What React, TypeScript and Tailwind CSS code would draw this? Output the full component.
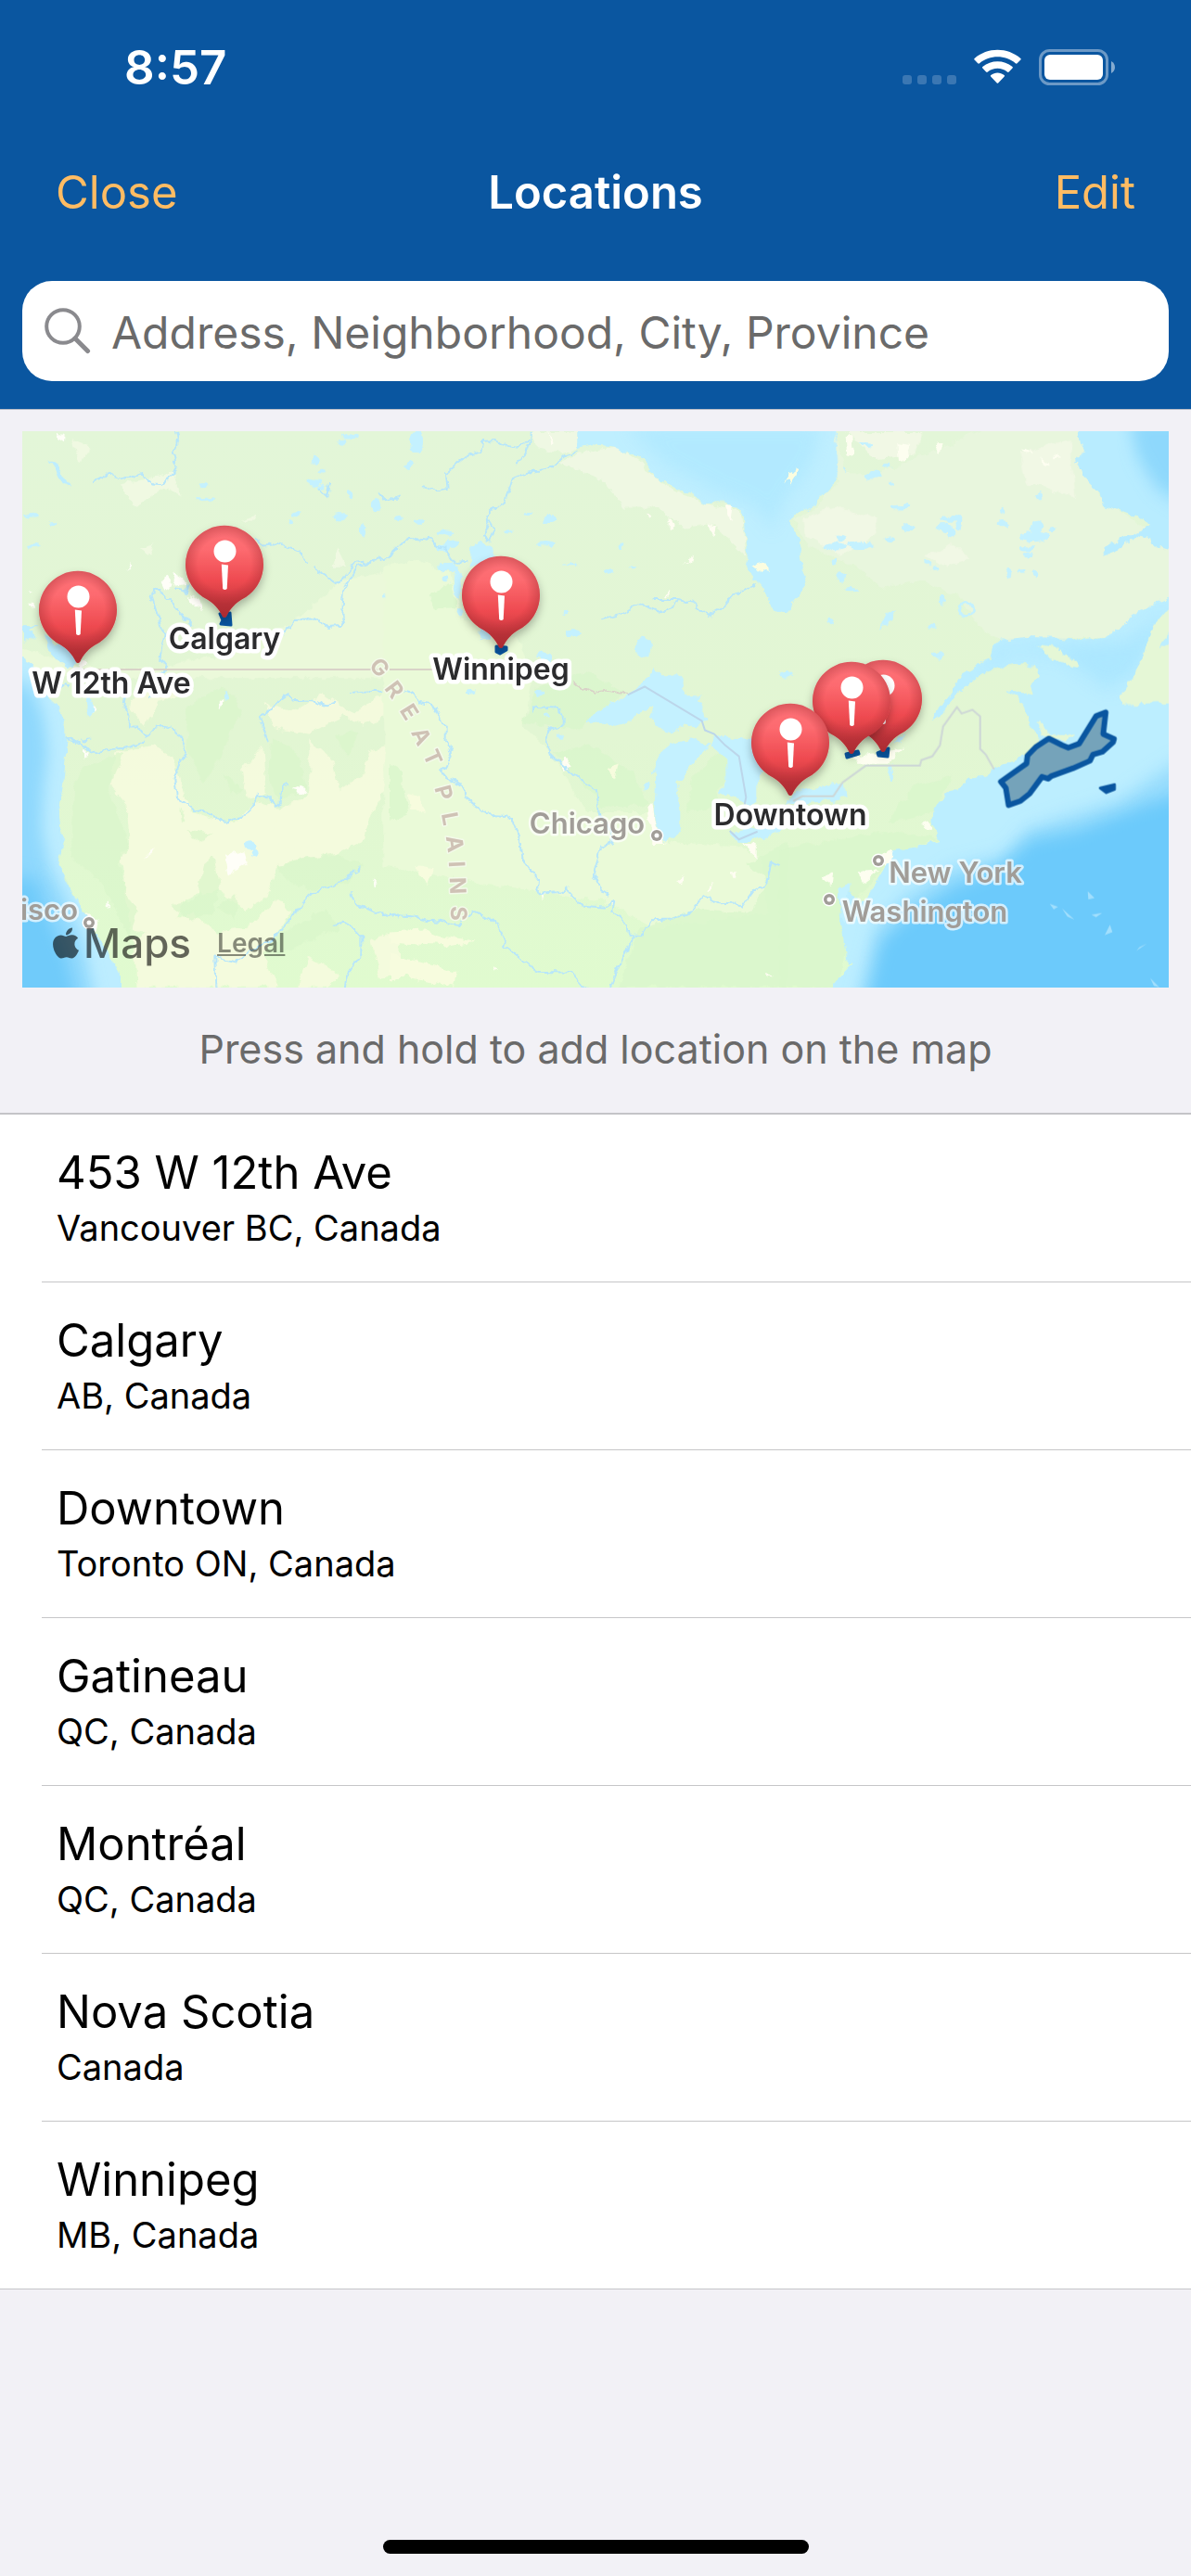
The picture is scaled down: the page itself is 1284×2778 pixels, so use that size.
import { useState } from "react";
import { FaApple } from "react-icons/fa";

type Location = { name: string; detail: string };

const locations: Location[] = [
  { name: "453 W 12th Ave", detail: "Vancouver BC, Canada" },
  { name: "Calgary", detail: "AB, Canada" },
  { name: "Downtown", detail: "Toronto ON, Canada" },
  { name: "Gatineau", detail: "QC, Canada" },
  { name: "Montréal", detail: "QC, Canada" },
  { name: "Nova Scotia", detail: "Canada" },
  { name: "Winnipeg", detail: "MB, Canada" },
];

// tip of each pin, back to front
const pins = [
  { x: 242, y: 666 },
  { x: 84, y: 715 },
  { x: 540, y: 699 },
  { x: 952, y: 811 },
  { x: 918, y: 813 },
  { x: 852, y: 858 },
];

const pinLabels = [
  { text: "Calgary", x: 242, y: 700 },
  { text: "W 12th Ave", x: 120, y: 748 },
  { text: "Winnipeg", x: 540, y: 733 },
  { text: "Downtown", x: 852, y: 890 },
];

const cities = [
  { text: "isco", x: 53, y: 992, dotX: 96, dotY: 995 },
  { text: "Chicago", x: 633, y: 899, dotX: 708, dotY: 901 },
  { text: "New York", x: 1030, y: 952, dotX: 947, dotY: 928 },
  { text: "Washington", x: 997, y: 994, dotX: 894, dotY: 970 },
];

const plains = [
  { char: "G", x: 409, y: 720, angle: 50 },
  { char: "R", x: 425, y: 744, angle: 53 },
  { char: "E", x: 441, y: 768, angle: 58 },
  { char: "A", x: 454, y: 794, angle: 63 },
  { char: "T", x: 466, y: 817, angle: 66 },
  { char: "P", x: 478, y: 855, angle: 75 },
  { char: "L", x: 485, y: 883, angle: 79 },
  { char: "A", x: 490, y: 910, angle: 82 },
  { char: "I", x: 492, y: 932, angle: 87 },
  { char: "N", x: 493, y: 955, angle: 88 },
  { char: "S", x: 494, y: 985, angle: 91 },
];

// [x, y, rx, ry] in tile units
const westLakes = [
  [1128, 52, 24, 9], [1108, 68, 12, 6], [1018, 120, 10, 14], [1045, 145, 16, 6], [1015, 172, 24, 9],
  [1040, 186, 14, 7], [1130, 208, 8, 14], [1215, 238, 16, 14], [958, 257, 16, 7], [944, 282, 9, 7],
  [1100, 268, 22, 9], [1172, 302, 8, 16], [665, 216, 32, 5], [660, 182, 16, 5], [1245, 478, 6, 8],
  [100, 262, 20, 6], [176, 284, 14, 5], [110, 346, 22, 5], [730, 748, 7, 13], [290, 775, 10, 26],
  [810, 1150, 20, 14], [824, 1172, 12, 14],
];

const centralLakes = [
  [90, 66, 24, 30], [62, 128, 14, 9], [28, 272, 10, 10], [95, 281, 11, 7], [178, 312, 26, 8],
  [200, 340, 26, 10], [172, 350, 20, 8], [190, 402, 34, 12], [221, 448, 12, 44], [180, 435, 10, 6],
  [448, 260, 14, 4], [520, 274, 24, 10], [386, 307, 16, 5], [505, 338, 28, 7], [586, 396, 22, 3],
  [750, 343, 10, 6], [708, 414, 12, 6], [784, 402, 12, 4], [570, 525, 10, 6], [595, 578, 22, 10],
  [820, 618, 26, 26], [502, 640, 24, 10], [484, 740, 18, 8], [266, 737, 14, 6], [510, 797, 12, 4],
  [552, 856, 12, 6], [827, 992, 9, 9], [228, 522, 10, 9], [1276, 690, 12, 7], [308, 580, 22, 18],
];

const eastLakes = [
  [278, 72, 20, 5], [305, 155, 24, 11], [350, 132, 14, 8], [362, 173, 10, 5], [388, 242, 34, 6],
  [418, 297, 22, 9], [180, 346, 40, 9], [264, 342, 44, 9], [358, 328, 20, 8], [196, 326, 20, 8],
  [180, 388, 10, 8], [200, 428, 16, 12], [234, 462, 20, 4], [535, 296, 26, 12], [555, 272, 32, 9],
  [560, 312, 14, 14], [582, 284, 10, 20], [725, 252, 8, 6], [724, 288, 14, 9], [838, 212, 14, 8],
  [824, 320, 50, 14], [834, 296, 22, 16], [800, 352, 26, 8], [884, 300, 12, 6], [806, 370, 18, 7],
  [742, 418, 12, 12], [785, 414, 12, 6], [825, 422, 10, 9], [484, 390, 12, 5], [504, 407, 10, 8],
  [528, 490, 10, 9], [496, 560, 16, 6], [170, 548, 10, 7], [514, 636, 20, 8], [22, 690, 22, 8],
  [362, 958, 7, 28],
];

// lake list to closed path of ellipses
const toPath = (lakes: number[][]) =>
  lakes
    .map(
      ([x, y, rx, ry]) =>
        `M${x - rx} ${y}a${rx} ${ry} 0 1 0 ${rx * 2} 0a${rx} ${ry} 0 1 0 ${-rx * 2} 0Z`
    )
    .join("");

const pacific =
  "M72 645L100 660 130 690 160 755 185 775 200 800 214 830V890L208 960 200 1010 188 1050 195 1100 207 1130 190 1200 220 1250 240 1290 290 1350 320 1400 360 1450 390 1500V1545H60V645Z";

const hudsonBay =
  "M610 20V85L650 75 720 80 800 105 860 150 870 170 960 200 1020 232 1080 228 1110 240 1145 245 1148 310 1155 360 1150 400 1185 440 1200 455 1220 480 1240 520 1260 517 1290 525 1300 500 1340 460 1350 430 1330 380 1325 330 1295 275 1320 260 1380 235 1450 165 1480 155 1465 130 1450 80 1438 20Z";

const labradorSea =
  "M965 20L975 70 990 90 960 110 975 150 1010 180 1040 205 1045 235 1100 250 1150 265 1200 285 1180 300 1150 310 1060 345 1050 372 1100 355 1160 315 1200 322 1210 355 1240 345 1280 355V20Z";

const atlantic =
  "M1280 480L1220 500 1140 530 1100 570 1060 592 980 598 900 592 800 590 720 597 690 620 680 650 630 670 590 690 560 730 530 770 490 812 530 795 570 745 620 710 700 675 780 660 830 670 838 700 815 718 825 745 790 740 730 735 780 760 800 790 815 830 845 860 830 900 740 925 690 940 670 965 610 970 590 990 540 1010 500 1050 495 1090 520 1135 460 1150 370 1160 340 1210 290 1280 255 1310 225 1265 205 1260 190 1290 200 1350 215 1450 235 1470 190 1510 150 1550H1280Z";

const river = {
  fill: "none",
  stroke: "#b7e6fb",
  strokeWidth: 2,
  vectorEffect: "non-scaling-stroke" as const,
};

const border = {
  fill: "none",
  stroke: "#d9d3c8",
  strokeWidth: 2,
  vectorEffect: "non-scaling-stroke" as const,
};

function WestTile() {
  return (
    <g transform="translate(0 450) scale(0.33333 0.40179)">
      <g filter="url(#rough)">
        <path fill="#ebf9da" d="M72 620L250 670 480 680 700 640 930 560 1100 440 1330 400V700H72Z" />
        <g fill="#f7fbde" opacity=".9">
          <path d="M450 710L560 700 600 740 520 760 470 830 420 780ZM860 770L960 790 1040 740 1130 790 1290 730 1240 800 1180 830 1110 800 1000 850 880 830ZM370 900L500 880 560 920 620 1060 760 1090 820 1030 900 1050 1010 1010 1080 1040 1040 1180 900 1200 860 1290 790 1320 700 1270 600 1290 540 1400 420 1370 390 1170 420 1150 410 1040 360 990ZM780 950L850 880 860 1010 800 1020Z" />
          <path d="M1000 860L1080 930 1100 1000 1180 960 1190 900 1270 880 1290 960 1240 1010 1190 1080 1180 1140 1060 1180 1000 1150 900 1160 890 1080 960 1060 1000 1000Z" />
          <path d="M430 1400L620 1330 700 1380 800 1370 900 1290 940 1330 850 1440 900 1530H440ZM1000 1450L1100 1500 1060 1530H960ZM1200 1400L1290 1380V1490L1230 1510Z" />
        </g>
        <path fill="#d9f5cb" opacity=".75" d="M610 1110L690 1120 640 1140ZM690 1180L710 1250 690 1330 610 1350 545 1310 640 1290 660 1200ZM720 950L790 1000 750 1010ZM900 1200L1080 1170 1180 1200 1120 1250 1000 1270 930 1240ZM1080 860L1160 840 1130 910ZM580 1050L600 1080 585 1090ZM700 1310L770 1280 760 1350ZM860 1410L1050 1320 1100 1370 900 1440ZM270 940L400 900 350 1000 420 1150 380 1200 440 1330 420 1400 330 1250 230 1180 240 1000ZM600 780L720 720 780 780 720 900 660 980 610 900ZM880 860L960 900 990 1000 900 1030 870 960Z" />
        <path fill="#f0f9e2" d="M390 180L560 150 585 210 540 190 430 240ZM780 280L830 260 820 280ZM450 350L490 370 500 340ZM230 60L290 80 260 120ZM1090 350L1120 400 1070 400Z" />
        <path fill="#fffef8" d="M180 40L212 42 210 65 190 55ZM405 410L420 390 420 402ZM515 440L540 428 560 450 530 465ZM555 412L590 430 605 450 570 455ZM600 475L650 490 660 515 630 510ZM88 500L110 500 110 520ZM90 465L105 470 95 475ZM290 760L305 790 290 800ZM255 655L285 668 260 672ZM270 890L285 905 270 910ZM945 1000L970 990 990 1010ZM280 1330L320 1350 310 1380 280 1360ZM340 1310L355 1300 350 1315ZM730 1180L790 1160 800 1200 740 1230ZM1205 1240L1220 1250 1212 1255ZM465 1185L500 1148 490 1170ZM710 770L725 760 715 785Z" />
        <path fill="#bdedff" d={pacific} />
        <path fill="#bdedff" d="M140 585L170 600 220 625 250 650 240 675 190 655 155 625ZM72 560L125 560 90 570 120 590 72 600ZM160 110L190 130 230 195 200 180Z" />
        <path fill="#c4f1ff" d={toPath(westLakes)} />
      </g>
      <clipPath id="pacificClip">
        <path d={pacific} />
      </clipPath>
      <g clipPath="url(#pacificClip)">
        <path fill="#8fd8fd" filter="url(#soft)" d="M20 700L100 720 140 800 155 900 140 1000 135 1110 160 1210 210 1290 270 1420 310 1580H20Z" />
        <path fill="#6fcbfa" filter="url(#soft)" d="M20 1230L120 1240 160 1350 210 1440 250 1580H20Z" />
      </g>
      <g filter="url(#rough)">
        <path {...river} d="M570 37L575 60 560 90 570 130 555 160 520 180 490 178 460 150 410 165 350 153 300 175" />
        <path {...river} d="M820 322L850 342 905 338 965 358 1000 390M1010 400L1085 445 1105 440 1145 390 1210 385 1260 375 1290 350M1210 385L1155 400 1110 470 1105 515 1118 535 1100 562 1060 565 1030 543 950 545 920 580" />
        <path {...river} d="M490 480L500 462 560 505 620 560M490 480L530 580 515 640 540 665 525 690M570 460L600 470 608 445" />
        <path {...river} d="M405 750L400 775 418 800 420 830 445 830 468 860 490 838 550 828 575 850 602 895 565 970 572 1015 625 1055 680 1060 700 1078 735 1083 790 1072 835 1010 860 1020 890 1045 908 1030 915 990 932 985" />
        <path {...river} d="M468 870L400 888 330 893 290 900 265 880 215 855M265 868L295 862M190 720L225 725" />
        <path {...river} d="M867 875L860 850 838 808 880 775 935 742 950 760 1000 758 1060 775 1080 768M1130 742L1210 736 1290 745M480 750L540 735" />
        <path {...river} d="M715 1545L700 1530 697 1450 765 1462 830 1420 885 1400 940 1345 1000 1280 1060 1262 1160 1220 1163 1205M1138 1275L1155 1310 1200 1322 1290 1343M1075 1357L1140 1365 1168 1390 1168 1440 1120 1500 1115 1540M1225 205L1240 220 1290 215M1030 190L1060 215 1068 172" />
      </g>
      <path {...border} d="M270 677H1290" />
    </g>
  );
}

function CentralTile() {
  return (
    <g transform="translate(420 450) scale(0.33333 0.40179)">
      <g filter="url(#rough)">
        <path fill="#eafad8" d="M-20 400L90 380 200 420 230 540 420 600 460 700 430 830 520 900 640 1060 840 1060 900 1140 1110 1150 1200 1180 1230 1330 850 1370 700 1300 300 1250 -20 1200Z" />
        <path fill="#daf6cc" opacity=".8" d="M125 480L200 440 215 510 150 515ZM430 820L470 730 640 680 760 740 640 820 600 840ZM530 900L650 880 790 960 840 1040 690 1050 600 960ZM980 960L1080 890 1100 960 1060 1000 1070 1040 960 1060ZM0 930L40 950 60 1060 0 1090ZM1150 1200L1290 1140V1530H740L800 1380 1000 1320 1160 1330 1230 1240Z" />
        <path fill="#f7fcde" d="M0 1380L110 1375 150 1390 280 1405 190 1420 0 1410ZM0 1440L220 1490 210 1530 60 1500 0 1515ZM80 1200L140 1210 120 1260ZM60 1010L100 1020 110 1060 70 1050ZM700 940L740 930 730 970Z" />
        <path fill="#eff8e3" d="M550 120L640 90 740 80 850 150 880 180 1010 230 1140 250 1150 370 1050 290 960 300 850 240 760 240 690 170ZM455 40L610 40 610 80 560 95 480 80Z" />
        <path fill="#fffdf2" d="M515 40L530 70 520 75ZM1085 235L1112 240 1105 280 1095 260ZM1030 290L1052 295 1045 322ZM950 395L990 370 985 385ZM835 255L850 265 840 270ZM905 270L920 290 905 300ZM550 930L570 915 590 940 565 948ZM890 478L910 465 905 480ZM832 1050L850 1035 862 1110 890 1140 850 1140ZM930 1245L955 1230 945 1250ZM1100 1225L1120 1225 1115 1240ZM1140 1145L1190 1150 1190 1185ZM1030 1270L1045 1250 1040 1275ZM490 1275L508 1280 495 1295ZM340 1470L355 1480 345 1488ZM715 1300L730 1300 720 1312ZM1220 1490L1235 1500 1225 1502Z" />
        <path fill="#bfefff" d={hudsonBay} />
        <path fill="#c4f1ff" d="M265 340L300 333 330 345 345 400H260Z" />
        <path fill="#c4f1ff" d="M635 825L670 785 730 765 780 745 830 700 850 675 880 690 935 690 965 745 1010 745 1000 760 1025 810 1000 830 950 825 920 842 870 835 840 810 855 775 800 795 765 820 720 830 700 820Z" />
        <path fill="#c4f1ff" d="M848 960L865 910 910 880 975 865 1040 875 1015 905 970 940 930 985 940 1050 940 1100 920 1130 890 1135 865 1110 855 1060 860 1000 862 950ZM1050 855L1100 860 1200 865 1220 930 1205 955 1180 990 1180 1035 1155 1045 1130 1020 1100 1015 1065 1005 1090 975 1090 920 1040 885ZM1100 1110L1160 1105 1250 1090 1275 1105 1200 1130 1130 1148Z" />
        <path fill="#c4f1ff" d={toPath(centralLakes)} />
      </g>
      <clipPath id="hudsonClip">
        <path d={hudsonBay} />
      </clipPath>
      <g clipPath="url(#hudsonClip)">
        <path fill="#afe8ff" opacity=".8" filter="url(#soft)" d="M760 20H1400L1360 130 1270 230 1240 300 1180 240 1060 200 900 130Z" />
      </g>
      <path fill="#fbfde0" filter="url(#rough)" d="M1170 395L1195 385 1215 395 1228 415 1190 408ZM1272 178L1290 155 1305 150 1310 130 1322 135 1312 160 1298 178 1290 165Z" />
      <g filter="url(#rough)">
        <path {...river} d="M610 90L570 102 515 140 440 150 397 165 375 230 335 245 316 265 320 290 303 325 325 330 340 300 322 275M455 37L455 60 440 100 408 125M450 60L420 82 370 75 340 62 300 65 295 90 250 105 180 152 185 192 150 195 108 185M0 220L35 212M0 375L60 325 120 333 133 322 150 345 175 350 210 388 250 385" />
        <path {...river} d="M685 543L745 530 790 505 830 508 870 522 920 510 935 488 980 497 1030 533 1080 510 1110 480 1185 450M860 488L935 488" />
        <path {...river} d="M50 735L70 740 95 765 145 775 165 810 182 830 182 870 200 905 170 950 185 965 240 990 245 1020 318 1068 380 1070 403 1090 425 1140 430 1185 480 1240 475 1265 485 1280 540 1275 575 1267 620 1308 695 1313 725 1297 718 1325 765 1360 770 1392 785 1397 755 1450 710 1540" />
        <path {...river} d="M462 790V775L530 780 560 800 560 825 520 840 507 865 520 905 555 930 600 960 668 1000 680 1070 720 1110 722 1135 685 1155 660 1225 705 1290" />
        <path {...river} d="M785 1390L820 1392 850 1352 910 1350 965 1335 1015 1285 1060 1305 1115 1303 1135 1320 1180 1270 1220 1250 1235 1195 1265 1205M0 1335L80 1340 130 1350 230 1362 275 1325 350 1360 375 1400 370 1420 480 1488 590 1490 640 1540" />
        <path {...border} d="M595 710L620 725 660 740 700 733 770 745" />
      </g>
      <path {...border} d="M0 677H150" />
      <path {...border} stroke="#bcd6ea" d="M770 745L825 723 1010 815 1020 840 1050 850 1085 880 1130 910 1153 1020 1148 1040M1100 1110L1130 1133 1190 1112" />
    </g>
  );
}

function EastTile() {
  return (
    <g transform="translate(840 450) scale(0.33333 0.40179)">
      <g filter="url(#rough)">
        <path fill="#e8f6dd" d="M180 20L192 80 207 130 225 150H330L700 20H965L1040 220 1280 350V480L1060 592 720 597 640 560 580 480 460 440 330 460 250 400 100 350 62 300 40 278 120 240 190 170Z" />
        <path fill="#f1f8e5" d="M780 90L940 60 960 220 900 200 800 180ZM80 270L180 240 320 270 310 320 200 370 90 320ZM220 40H460L440 100 300 110ZM470 370L560 340 620 380 540 400Z" />
        <path fill="#daf6cc" opacity=".8" d="M0 1160L340 1110 520 1130 380 1170 250 1290 190 1530H0ZM430 990L560 960 500 1060 350 1090Z" />
        <path fill="#fdfef0" d="M215 50L235 50 240 100 220 110ZM385 70L430 75 405 120 390 115ZM505 70L530 70 520 95ZM850 110L880 130 855 128ZM890 95L910 105 885 108ZM790 80L820 95 795 92ZM135 1235L175 1215 170 1260ZM250 1220L320 1215 270 1250ZM460 1095L490 1085 495 1108ZM320 1180L375 1158 355 1190 400 1180 345 1205ZM240 910L400 890 350 930 250 930Z" />
        <path fill="#b8ecff" d={labradorSea} />
        <path fill="#bceeff" d={atlantic} />
        <path fill="#c4f1ff" d="M20 1040L60 1000 130 993 210 980 215 1020 180 1030 100 1035ZM323 570L345 530 385 515 360 545ZM370 870L410 850 390 875Z" />
        <path fill="#c4f1ff" d="M190 1265L230 1250 215 1360 200 1340Z" />
        <path fill="#c4f1ff" d={toPath(eastLakes)} />
        <circle cx="605" cy="514" r="21" fill="none" stroke="#c4f1ff" strokeWidth="8" />
      </g>
      <clipPath id="labradorClip">
        <path d={labradorSea} />
      </clipPath>
      <g clipPath="url(#labradorClip)">
        <path fill="#8ed8fc" filter="url(#soft)" d="M1130 0H1320V240L1220 190 1160 110Z" />
      </g>
      <clipPath id="atlanticClip">
        <path d={atlantic} />
      </clipPath>
      <g clipPath="url(#atlanticClip)">
        <path fill="#a6e4ff" opacity=".7" filter="url(#soft)" d="M640 680L720 620 900 610 1120 600 1260 520 1150 690 1060 730 900 640 760 630Z" />
        <path fill="#97dcfd" filter="url(#soft)" d="M1340 900L1220 960 1100 1030 940 1070 800 1110 720 1180 560 1210 400 1290 310 1370 240 1600H1340Z" />
        <path fill="#6ccafb" filter="url(#soft)" d="M1340 1000L1180 1040 960 1110 820 1130 710 1210 560 1260 400 1350 330 1410 280 1600H1340Z" />
      </g>
      <g filter="url(#rough)">
        <path fill="#e5f7d6" d="M1280 490L1230 540 1200 570 1180 640 1140 700 1100 750 1115 770 1180 768 1280 765ZM835 615L890 620 960 650 970 670 910 660 860 635ZM835 815L870 845 955 850 930 865 880 860 850 850Z" />
        <path fill="#bdeeff" d="M1235 620L1250 590 1280 570V600Z" />
      </g>
      <path fill="#b9e8fd" opacity=".7" d="M875 1306L902 1314 888 1321ZM915 1318L955 1348 932 1340ZM998 1272L1020 1290 1000 1294ZM1010 1335L1045 1330 1025 1342ZM1070 1362L1078 1382 1053 1390ZM1155 1432L1190 1412 1165 1422ZM1200 1505L1230 1530 1212 1526Z" />
      <path {...border} stroke="#cdd6d6" d="M45 1030L75 1017H175L205 980 280 935H455L460 920 495 910 520 880 530 830 575 778 590 795 625 785 650 803V890L668 905 695 945" />
      {/* Nova Scotia */}
      <path
        fill="#5a87a0"
        fillOpacity=".72"
        stroke="#0a56a0"
        strokeWidth="6"
        strokeLinejoin="round"
        vectorEffect="non-scaling-stroke"
        d="M717 978L800 929 803 908 830 885 872 862 915 880 935 887 970 876 1025 802 1056 792 1048 850 1083 863 1080 872 1045 898 1015 905 1005 922 950 942 880 963 870 970 850 965 810 1010 780 1030 742 1041 733 995Z"
      />
      <path fill="#0a56a0" stroke="#0a56a0" strokeWidth="8" strokeLinejoin="round" d="M1038 995L1085 986V998L1058 1007Z" />
    </g>
  );
}

function Pin({ x, y }: { x: number; y: number }) {
  return (
    <g transform={`translate(${x} ${y})`}>
      <path
        fill="url(#pin)"
        filter="url(#pinShadow)"
        d="M-2 -1C-6 -9 -10 -15 -23 -22A42 42 0 1 1 23 -22C10 -15 6 -9 2 -1Q0 1 -2 -1Z"
      />
      <path fill="url(#pinEdge)" d="M-2 -1C-6 -9 -10 -15 -23 -22A42 42 0 1 1 23 -22C10 -15 6 -9 2 -1Q0 1 -2 -1Z" />
      <circle cx="0.5" cy="-71.5" r="12" fill="#fff" />
      <path fill="#fff" d="M-3.2 -57.5L4 -56.5 2.7 -31Q0.4 -29 -1.8 -31Z" />
    </g>
  );
}

function LocationMap() {
  return (
    <svg
      viewBox="24 465 1236 600"
      className="block w-full h-auto overflow-hidden font-['Inter',sans-serif] font-semibold"
      role="img"
      aria-label="Map"
    >
      <defs>
        <linearGradient id="land" x1="0" y1="0" x2="0" y2="1">
          <stop offset="0" stopColor="#e3f6d8" />
          <stop offset=".55" stopColor="#e2f6d3" />
          <stop offset="1" stopColor="#e0fbcf" />
        </linearGradient>
        <linearGradient id="pin" x1="0" y1="0" x2="0" y2="1">
          <stop offset="0" stopColor="#fd7177" />
          <stop offset=".25" stopColor="#fd6b70" />
          <stop offset=".6" stopColor="#ee4a50" />
          <stop offset="1" stopColor="#b32a32" />
        </linearGradient>
        <radialGradient id="pinEdge" gradientUnits="userSpaceOnUse" cx="0" cy="-58" r="44">
          <stop offset=".65" stopColor="#a02a30" stopOpacity="0" />
          <stop offset="1" stopColor="#a02a30" stopOpacity=".45" />
        </radialGradient>
        <filter id="pinShadow" x="-30%" y="-30%" width="160%" height="160%">
          <feDropShadow dx="0" dy="5" stdDeviation="5" floodColor="#000" floodOpacity=".28" />
        </filter>
        <filter id="soft" x="-20%" y="-20%" width="140%" height="140%">
          <feGaussianBlur stdDeviation="24" />
        </filter>
        <filter id="rough" x="-5%" y="-5%" width="110%" height="110%" colorInterpolationFilters="sRGB">
          <feTurbulence type="fractalNoise" baseFrequency="0.03" numOctaves="4" seed="4" />
          <feDisplacementMap in="SourceGraphic" scale="26" xChannelSelector="R" yChannelSelector="G" />
        </filter>
      </defs>
      <rect x="24" y="465" width="1236" height="600" fill="url(#land)" />
      <WestTile />
      <CentralTile />
      <EastTile />

      {/* areas under the pins */}
      <g fill="#0a56a0" stroke="#0a56a0" strokeWidth="3" strokeLinejoin="round">
        <path d="M237 662L248 661 249 674 238 673 240 669Z" />
        <path d="M535 697L546 698 546 701 539 705 535 703Z" />
        <path d="M912 813L925 810 926 813 913 817Z" />
        <path d="M946 812L958 807 957 816 947 815Z" />
      </g>

      <g textAnchor="middle" strokeLinejoin="round" paintOrder="stroke">
        <g className="font-bold" fontSize="24" fill="#cfc2b5" stroke="#f3faea" strokeWidth="3">
          {plains.map(({ char, x, y, angle }, i) => (
            <text key={i} transform={`translate(${x} ${y}) rotate(${angle})`} y="8">
              {char}
            </text>
          ))}
        </g>
        <g fontSize="31" fill="#a19d98" stroke="#ffffffb0" strokeWidth="5">
          {cities.map(({ text, x, y, dotX, dotY }) => (
            <g key={text}>
              <text x={x} y={y}>
                {text}
              </text>
              <circle cx={dotX} cy={dotY} r="6" stroke="#fff" strokeWidth="3" />
              <circle cx={dotX} cy={dotY} r="2.5" fill="#fff" stroke="none" />
            </g>
          ))}
        </g>
        <g fontSize="32" fill="#2b2b2d" stroke="#fff" strokeWidth="9">
          {pinLabels.map(({ text, x, y }) => (
            <text key={text} x={x} y={y}>
              {text}
            </text>
          ))}
        </g>
      </g>

      {pins.map(({ x, y }) => (
        <Pin key={x} x={x} y={y} />
      ))}
    </svg>
  );
}

function StatusBar() {
  return (
    <div className="h-[146px] pl-[134px] pr-[82px] flex justify-between items-center">
      <div className="text-[51px] leading-[60px] font-semibold">8:57</div>
      <svg width="230" height="40" viewBox="0 0 230 40" fill="#fff" aria-hidden="true">
        <g fillOpacity=".2">
          <rect x="1" y="28" width="10" height="10" rx="3" />
          <rect x="17" y="28" width="10" height="10" rx="3" />
          <rect x="33" y="28" width="10" height="10" rx="3" />
          <rect x="49" y="28" width="10" height="10" rx="3" />
        </g>
        <path d="M78.6 11.6a1 1 0 0 1 0-1.5C92.4-2.3 114.4-2.3 128.3 10.1a1 1 0 0 1 0 1.5L124.6 15.3a1.3 1.3 0 0 1-1.8 0C112 6 95 6 84 15.3a1.3 1.3 0 0 1-1.8 0Z" />
        <path d="M87.3 20.6a1 1 0 0 1 0-1.5c9.2-7.9 23-7.9 32.2 0a1 1 0 0 1 0 1.5l-3.8 3.9a1.3 1.3 0 0 1-1.8 0c-6-5-15-5-21 0a1.3 1.3 0 0 1-1.8 0Z" />
        <path d="M96.3 29.7a1 1 0 0 1 0-1.6c4.3-3.4 10-3.4 14.3 0a1 1 0 0 1 0 1.6l-6.2 6.6a1.3 1.3 0 0 1-1.9 0Z" />
        <rect x="149.5" y="1.5" width="72" height="36" rx="10" fill="none" stroke="#fff" strokeOpacity=".4" strokeWidth="3" />
        <rect x="154" y="6" width="63" height="27" rx="6" />
        <path d="M226 13c5.3 2.5 5.3 10.5 0 13Z" fillOpacity=".5" />
      </svg>
    </div>
  );
}

export default function App() {
  const [query, setQuery] = useState("");

  return (
    <div className="w-full min-h-screen flex flex-col bg-[#f2f1f6] text-black font-['Inter',sans-serif]">
      <header className="bg-[#0a56a0] text-white border-b border-[#b9bcc6]">
        <StatusBar />
        <div className="h-[124px] px-[60px] grid grid-cols-3 items-center text-[49px] leading-[60px]">
          <button className="justify-self-start text-[#ffbc63] cursor-pointer">Close</button>
          <h1 className="justify-self-center font-semibold">Locations</h1>
          <button className="justify-self-end text-[#ffbc63] cursor-pointer">Edit</button>
        </div>
        <div className="px-6 pt-[33px] pb-[30px]">
          <label className="h-[108px] pl-6 pr-6 flex items-center gap-[22px] bg-white rounded-[32px]">
            <svg width="50" height="50" viewBox="0 0 50 50" fill="none" stroke="#8a8a8e" aria-hidden="true">
              <circle cx="20" cy="20" r="17.8" strokeWidth="4" />
              <path d="M33 33L46.5 46.5" strokeWidth="5" strokeLinecap="round" />
            </svg>
            <input
              className="flex-auto min-w-0 pt-1 text-[48px] leading-[60px] text-black placeholder:text-[#6a6a6a] placeholder:opacity-100 outline-none"
              aria-label="Search locations"
              placeholder="Address, Neighborhood, City, Province"
              value={query}
              onChange={(e) => setQuery(e.target.value)}
            />
          </label>
        </div>
      </header>

      <div className="px-6 pt-[23px]">
        <div className="relative">
          <LocationMap />
          <div className="absolute left-8 bottom-[18px] flex items-center text-black/60">
            <FaApple className="w-[30px] h-[38px]" />
            <div className="pl-1 text-[44px] leading-[60px] font-medium">Maps</div>
            <a href="#legal" className="ml-7 text-[28px] leading-[60px] font-semibold text-black/45 underline">
              Legal
            </a>
          </div>
        </div>
      </div>

      <p className="h-[135px] pb-1 flex items-center justify-center text-[43px] leading-[60px] text-[#6a6a6a]">
        Press and hold to add location on the map
      </p>

      <ul className="bg-white border-t-2 border-b border-[#c4c4c8]">
        {locations.map((location, i) => {
          return (
            <li key={location.name} className="pl-[45px]">
              <div
                className={
                  i < locations.length - 1
                    ? "h-[181px] pl-4 pt-[33px] border-b border-[#c6c6c8]"
                    : "h-[180px] pl-4 pt-[33px]"
                }
              >
                <div className="text-[49px] leading-[60px]">{location.name}</div>
                <div className="text-[38px] leading-[58px]">{location.detail}</div>
              </div>
            </li>
          );
        })}
      </ul>

      <div className="mt-auto pt-6 pb-6 flex justify-center">
        <div className="w-[459px] h-[15px] bg-black rounded-full"></div>
      </div>
    </div>
  );
}
